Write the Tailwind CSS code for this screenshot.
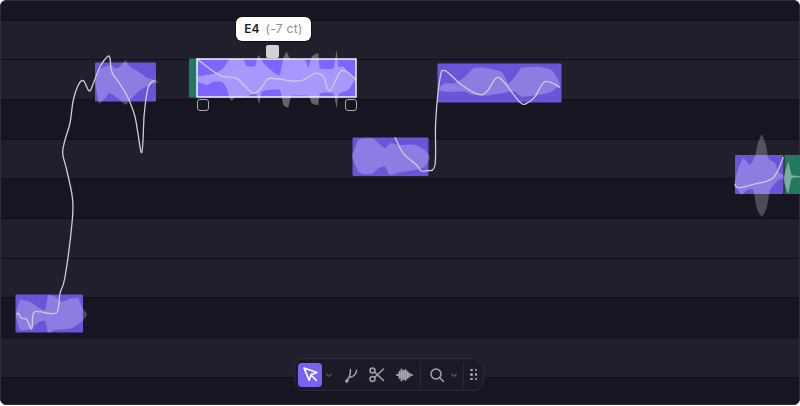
<!DOCTYPE html>
<html lang="en">
<head>
    <meta charset="UTF-8">
    <title>Pitch editor</title>
    <script src="https://cdn.jsdelivr.net/npm/@tailwindcss/browser@4"></script>
</head>
<body class="bg-white font-['Inter','Liberation_Sans',sans-serif]">
<div class="relative w-[800px] h-[406px] overflow-hidden">
    <!-- pitch rows -->
    <div class="flex flex-col h-[405px] rounded-[6px] overflow-hidden bg-[#161521] border border-[#2c2b36]">
        <div class="h-[18.6px] bg-[#161521]"></div>
        <div class="h-[39.7px] bg-[#201f2c] border-t border-[#100f18]"></div>
        <div class="h-[39.7px] bg-[#201f2c] border-t border-[#100f18]"></div>
        <div class="h-[39.7px] bg-[#161521] border-t border-[#100f18]"></div>
        <div class="h-[39.7px] bg-[#201f2c] border-t border-[#100f18]"></div>
        <div class="h-[39.7px] bg-[#161521] border-t border-[#100f18]"></div>
        <div class="h-[39.7px] bg-[#201f2c] border-t border-[#100f18]"></div>
        <div class="h-[39.7px] bg-[#201f2c] border-t border-[#100f18]"></div>
        <div class="h-[39.7px] bg-[#161521] border-t border-[#100f18]"></div>
        <div class="h-[39.7px] bg-[#201f2c] border-t border-[#100f18]"></div>
        <div class="flex-1 bg-[#161521] border-t border-[#100f18]"></div>
    </div>

    <!-- clips, waveforms and pitch curves -->
    <svg id="canvas" class="absolute inset-0 blur-[0.4px]" width="800" height="406" viewBox="0 0 800 406" fill="none">
        <rect x="189" y="58.500" width="8" height="39" fill="#23795f"/>
        <rect x="784.500" y="155" width="16" height="39" fill="#23795f"/>
        <rect x="15.500" y="294.500" width="67.500" height="38" rx="1" fill="#6a55d9"/>
        <rect x="95" y="62.500" width="61" height="39" rx="1" fill="#6a55d9"/>
        <rect x="352.500" y="137.500" width="76" height="38.500" rx="1" fill="#6a55d9"/>
        <rect x="437.500" y="63.500" width="124" height="39" rx="1" fill="#6a55d9"/>
        <rect x="735" y="155" width="48.500" height="39" rx="1" fill="#6a55d9"/>
        <rect x="197" y="59" width="159" height="38" fill="#7d65ff"/>
        <g id="waves"></g>
        <g id="curves"></g>
        <rect x="197" y="59" width="159" height="38" stroke="#f4f3fa" stroke-width="1.500"/>
    </svg>

    <!-- selected clip handles -->
    <div class="absolute left-[197px] top-[99px] w-[12px] h-[12px] rounded-[3px] border-[1.5px] border-[#a9a9af] bg-[#161521]"></div>
    <div class="absolute left-[345px] top-[99px] w-[12px] h-[12px] rounded-[3px] border-[1.5px] border-[#a9a9af] bg-[#161521]"></div>
    <div class="absolute left-[266px] top-[45px] w-[13px] h-[13px] rounded-[2px] bg-[#d2d2d6]"></div>

    <!-- note tooltip -->
    <div class="absolute left-[236px] top-[17px] w-[75px] h-[24px] rounded-[6px] bg-white flex items-center justify-center gap-[6px] text-[12px] leading-none shadow-[0_0_0_1px_#100f18]">
        <span class="font-semibold text-[#1d1d24]">E4</span>
        <span class="text-[#8d8d94] tracking-[0.3px]">(-7 ct)</span>
    </div>

    <!-- toolbar -->
    <div class="absolute left-[294px] top-[358px] w-[190px] h-[33px] rounded-[10px] bg-[#1b1a26] border border-[#2b2a37] flex items-center pl-[3px] text-[#a5a4ac]">
        <div class="w-[24px] h-[24px] rounded-[4px] bg-[#7b62f6] flex items-center justify-center">
            <svg width="17" height="17" viewBox="0 0 17 17" fill="none" stroke="#fff" stroke-width="1.700" stroke-linejoin="round" stroke-linecap="round"><path d="M2 2l13 4.500-5.800 2-2 5.800zM9.500 9.500l5 5"/></svg>
        </div>
        <svg class="ml-[3px] text-[#85848c]" width="8" height="8" viewBox="0 0 8 8" fill="none" stroke="currentColor" stroke-linecap="round"><path d="M1.500 3l2.500 2.500L6.500 3"/></svg>
        <svg class="ml-[9px] blur-[0.3px]" width="16" height="16" viewBox="0 0 16 16" fill="none" stroke="currentColor" stroke-width="1.500" stroke-linecap="round" stroke-linejoin="round"><path d="M8.500 2.500C8.500 6 8 8.500 7 10.500M14.500 3.500C14.500 7 11 10.500 7 10.500L5 13.500"/><circle cx="4.800" cy="14" r="1" fill="currentColor"/></svg>
        <svg class="ml-[11px] blur-[0.3px]" width="16" height="16" viewBox="0 0 16 16" fill="none" stroke="currentColor" stroke-width="1.500" stroke-linecap="round"><circle cx="3.500" cy="3.500" r="2.500"/><circle cx="3.500" cy="12" r="2.500"/><path d="M5.500 5l9 8.500M5.500 10.500l9-8.500"/></svg>
        <svg class="ml-[11px] blur-[0.4px]" width="17" height="16" viewBox="0 0 17 16" fill="none" stroke="currentColor" stroke-width="1.900" stroke-linecap="round"><path d="M1 8h1M3.500 5v6M5.500 2.500v11M7.500 4v8M9.500 3v10M11.500 5v6M13.500 6.500v3M15.500 8h.5"/></svg>
        <div class="ml-[7px] w-px h-[24px] bg-[#2b2a37]"></div>
        <svg class="ml-[8px]" width="16" height="16" viewBox="0 0 16 16" fill="none" stroke="currentColor" stroke-width="1.500" stroke-linecap="round"><circle cx="7" cy="7" r="5"/><path d="M11 11l3.500 3.500"/></svg>
        <svg class="ml-[5px] text-[#85848c]" width="8" height="8" viewBox="0 0 8 8" fill="none" stroke="currentColor" stroke-linecap="round"><path d="M1.500 3l2.500 2.500L6.500 3"/></svg>
        <div class="ml-[5px] w-px h-[24px] bg-[#2b2a37]"></div>
        <div class="ml-[6px] grid grid-cols-2 gap-[2px]">
            <div class="w-[2.5px] h-[2.5px] rounded-full bg-[#a5a4ac]"></div>
            <div class="w-[2.5px] h-[2.5px] rounded-full bg-[#a5a4ac]"></div>
            <div class="w-[2.5px] h-[2.5px] rounded-full bg-[#a5a4ac]"></div>
            <div class="w-[2.5px] h-[2.5px] rounded-full bg-[#a5a4ac]"></div>
            <div class="w-[2.5px] h-[2.5px] rounded-full bg-[#a5a4ac]"></div>
            <div class="w-[2.5px] h-[2.5px] rounded-full bg-[#a5a4ac]"></div>
        </div>
    </div>
</div>

<script>
    // catmull-rom through the points, coordinates are read off 3x crops
    function smooth(points, ox, oy, closed) {
        const k = closed ? 14 : 6; // waveforms keep their spikes, curves stay round
        const p = points.map(([x, y]) => [ox + x / 3, oy + y / 3]);
        const at = i => closed ? p[(i + p.length) % p.length] : p[Math.max(0, Math.min(p.length - 1, i))];
        let d = `M${p[0][0].toFixed(1)} ${p[0][1].toFixed(1)}`;
        const end = closed ? p.length : p.length - 1;
        for (let i = 0; i < end; i++) {
            const [a, b, c, e] = [at(i - 1), at(i), at(i + 1), at(i + 2)];
            d += `C${(b[0] + (c[0] - a[0]) / k).toFixed(1)} ${(b[1] + (c[1] - a[1]) / k).toFixed(1)} ${(c[0] - (e[0] - b[0]) / k).toFixed(1)} ${(c[1] - (e[1] - b[1]) / k).toFixed(1)} ${c[0].toFixed(1)} ${c[1].toFixed(1)}`;
        }
        return d + (closed ? "Z" : "");
    }

    const waves = [
        [0, 280, 0.24, [[48,100],[60,60],[90,65],[120,85],[135,90],[145,45],[165,50],[185,65],[215,55],[235,55],[248,85],[262,103],[248,122],[215,145],[165,150],[145,158],[135,122],[120,125],[90,148],[60,150],[48,110]]],
        [85, 50, 0.24, [[32,95],[40,60],[60,50],[78,45],[90,55],[105,50],[122,30],[132,48],[160,65],[190,85],[222,96],[190,105],[160,125],[135,150],[122,165],[105,150],[85,135],[72,130],[60,145],[42,160],[32,105]]],
        [180, 10, 0.33, [[55,200],[80,195],[105,190],[130,175],[148,148],[190,148],[200,168],[225,168],[235,135],[245,150],[255,165],[285,190],[300,195],[310,145],[320,125],[330,145],[375,150],[385,175],[395,140],[415,130],[420,175],[460,175],[470,120],[475,170],[490,170],[510,190],[525,205],[525,210],[505,240],[490,245],[475,255],[470,295],[460,250],[420,250],[415,285],[395,280],[385,258],[335,258],[325,292],[310,285],[300,240],[270,240],[245,245],[237,282],[228,250],[190,262],[165,262],[155,272],[148,262],[140,235],[125,215],[100,215],[80,225],[55,215]]],
        [345, 55, 0.24, [[22,300],[40,255],[60,250],[85,250],[100,265],[120,280],[135,265],[165,270],[210,270],[240,285],[255,307],[240,335],[210,345],[165,352],[135,360],[120,335],[100,340],[85,355],[60,358],[40,350],[22,310]]],
        [345, 55, 0.24, [[280,100],[300,85],[330,85],[360,65],[385,40],[420,38],[470,50],[490,85],[510,65],[530,38],[580,35],[620,45],[645,87],[620,110],[580,120],[530,125],[510,110],[490,110],[470,115],[420,122],[385,120],[360,110],[330,110],[300,110],[280,105]]],
        [720, 125, 0.24, [[44,170],[55,130],[70,100],[90,120],[105,95],[112,60],[125,28],[138,60],[145,100],[165,115],[175,140],[190,150],[190,160],[175,165],[150,195],[140,250],[125,275],[110,250],[100,195],[80,195],[65,210],[44,180]]],
        [720, 125, 0.4, [[192,155],[205,110],[215,150],[240,153],[240,157],[215,160],[205,205],[192,170]]]
    ];

    const curves = [
        [0, 0, [[50,945],[55,940],[65,955],[80,958],[95,987],[100,940],[120,935],[145,940],[172,935],[180,880],[195,831],[217,660],[217,591],[200,510],[188,459],[195,420],[210,369],[220,300],[235,255],[250,242],[265,270],[272,270],[282,245],[300,200],[322,170],[330,175],[335,215],[355,245],[380,285],[405,350],[425,458],[433,340],[445,260],[465,240]]],
        [180, 10, [[50,146],[120,197],[170,205],[220,250],[250,225],[270,205],[340,213],[370,210],[405,190],[430,200],[450,242],[485,182],[528,208]]],
        [345, 55, [[150,247],[175,295],[215,330],[228,347],[245,347],[270,330],[272,200],[285,70],[300,47],[350,90],[400,118],[425,110],[455,68],[480,85],[525,142],[545,145],[570,125],[600,80],[645,97]]],
        [720, 125, [[44,178],[55,188],[100,178],[160,158],[190,97]]]
    ];

    const ns = "http://www.w3.org/2000/svg";
    waves.forEach(([ox, oy, alpha, pts]) => {
        const path = document.createElementNS(ns, "path");
        path.setAttribute("d", smooth(pts, ox, oy, true));
        path.setAttribute("fill", "#fff");
        path.setAttribute("fill-opacity", alpha);
        document.getElementById("waves").appendChild(path);
    });
    curves.forEach(([ox, oy, pts]) => {
        const path = document.createElementNS(ns, "path");
        path.setAttribute("d", smooth(pts, ox, oy, false));
        path.setAttribute("stroke", "#cfccda");
        path.setAttribute("stroke-width", "1.300");
        document.getElementById("curves").appendChild(path);
    });
</script>
</body>
</html>
